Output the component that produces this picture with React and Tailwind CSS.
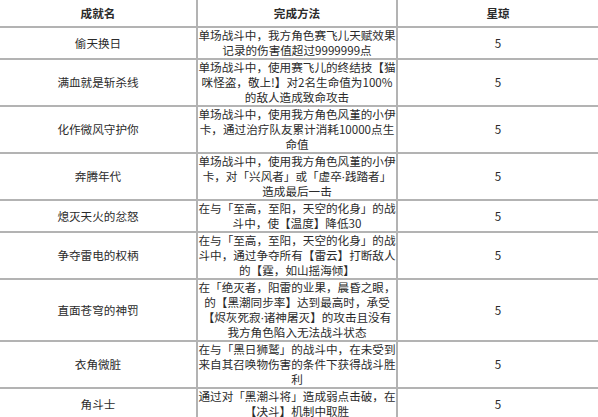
import React from 'react';

const rows = [
    { name: '偷天换日', how: ['单场战斗中，我方角色赛飞儿天赋效果', '记录的伤害值超过9999999点'], reward: '5' },
    { name: '满血就是斩杀线', how: ['单场战斗中，使用赛飞儿的终结技【猫', '咪怪盗，敬上!】对2名生命值为100%', '的敌人造成致命攻击'], reward: '5' },
    { name: '化作微风守护你', how: ['单场战斗中，使用我方角色风堇的小伊', '卡，通过治疗队友累计消耗10000点生', '命值'], reward: '5' },
    { name: '奔腾年代', how: ['单场战斗中，使用我方角色风堇的小伊', '卡，对「兴风者」或「虚卒·践踏者」', '造成最后一击'], reward: '5' },
    { name: '熄灭天火的忿怒', how: ['在与「至高，至阳，天空的化身」的战', '斗中，使【温度】降低30'], reward: '5' },
    { name: '争夺雷电的权柄', how: ['在与「至高，至阳，天空的化身」的战', '斗中，通过争夺所有【雷云】打断敌人', '的【霆，如山摇海倾】'], reward: '5' },
    { name: '直面苍穹的神罚', how: ['在「绝灭者，阳雷的业果，晨昏之眼，', '的【黑潮同步率】达到最高时，承受', '【烬灰死寂·诸神屠灭】的攻击且没有', '我方角色陷入无法战斗状态'], reward: '5' },
    { name: '衣角微脏', how: ['在与「黑日狮鹫」的战斗中，在未受到', '来自其召唤物伤害的条件下获得战斗胜', '利'], reward: '5' },
    { name: '角斗士', how: ['通过对「黑潮斗将」造成弱点击破，在', '【决斗】机制中取胜'], reward: '5' },
];

const font = "font-['Noto_Sans_CJK_SC','Noto_Sans',sans-serif]";

// the middle dot is half width in the source, CJK fonts draw it full width
const Line = ({ text }) => {
    const parts = text.split('·');
    return (
        <span className="whitespace-nowrap">
            {parts.map((p, i) => (
                <React.Fragment key={i}>
                    {i > 0 && <span className="font-['Noto_Sans',sans-serif]">·</span>}
                    {p}
                </React.Fragment>
            ))}
        </span>
    );
};

const App = () => {
    return (
        <div className={`h-[417px] w-[598px] overflow-hidden bg-white text-[11.6px] leading-[15px] text-[#2b2b2b] ${font}`}>
            {/* header */}
            <div className="grid grid-cols-[198px_200px_200px] border-b-2 border-[#b3b3b3] font-bold">
                <div className="flex h-[26px] items-center justify-center border-r-2 border-[#b3b3b3]">成就名</div>
                <div className="flex items-center justify-center border-r-2 border-[#b3b3b3]">完成方法</div>
                <div className="flex items-center justify-center">星琼</div>
            </div>

            {rows.map((row) => (
                <div key={row.name} className="grid grid-cols-[198px_200px_200px] border-b-2 border-[#b3b3b3]">
                    <div className="flex items-center justify-center border-r-2 border-[#b3b3b3]">{row.name}</div>
                    <div className="flex flex-col items-center justify-center border-r-2 border-[#b3b3b3] text-center">
                        {row.how.map((line, i) => (
                            <Line key={i} text={line} />
                        ))}
                    </div>
                    <div className="flex items-center justify-center">{row.reward}</div>
                </div>
            ))}
        </div>
    );
};

export default App;
